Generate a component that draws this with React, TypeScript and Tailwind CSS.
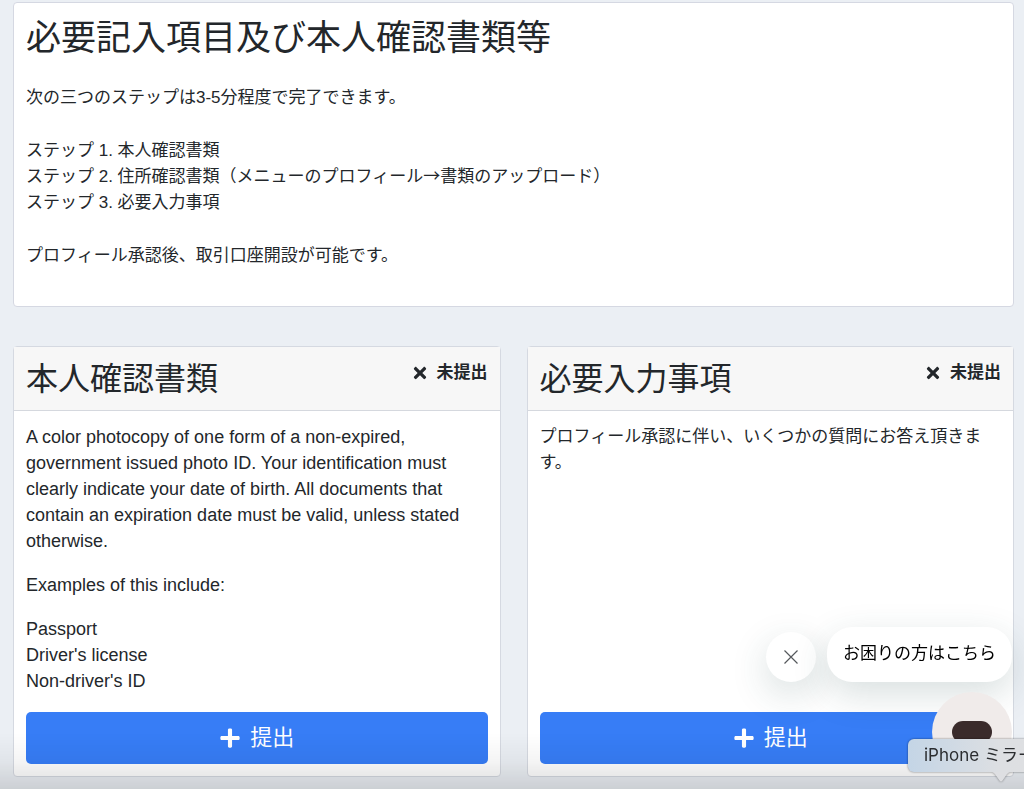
import type { ReactNode } from 'react';
import { FaPlus, FaTimes } from 'react-icons/fa';

function StepCard({ title, children }: { title: string; children: ReactNode }) {
  return (
    <section className="flex flex-col rounded-[4px] border border-[#d5d9e1] bg-white">
      <header className="flex items-start justify-between border-b border-[#d5d8de] bg-[#f7f7f7] px-3 pt-[13px] pb-3">
        <h2 className="text-[32px] leading-[38px]">{title}</h2>
        <p className="flex items-center gap-2 font-bold">
          <FaTimes className="size-[18px]" aria-hidden="true" />
          未提出
        </p>
      </header>
      <div className="flex grow flex-col px-3 pt-[13px] pb-3">
        <div className="grow space-y-[18px] pb-[18px]">{children}</div>
        <button
          type="button"
          className="flex h-[52px] w-full items-center justify-center gap-[9px] rounded-[5px] bg-[#377df6] text-[22px] text-white"
        >
          <FaPlus className="size-[22px]" aria-hidden="true" />
          提出
        </button>
      </div>
    </section>
  );
}

function ChatWidget() {
  return (
    <div className="fixed right-3 bottom-[17px] flex flex-col items-end gap-[10px] text-black">
      <div className="flex items-end gap-[11px]">
        <button
          type="button"
          aria-label="閉じる"
          className="flex size-[50px] items-center justify-center rounded-full bg-white text-[#55585c] shadow-[0_12px_36px_rgba(40,80,75,0.18)]"
        >
          <svg className="size-[14px]" viewBox="0 0 14 14" fill="none" stroke="currentColor" strokeWidth="1.2" aria-hidden="true">
            <path d="M0.5 0.5 13.5 13.5M13.5 0.5 0.5 13.5" />
          </svg>
        </button>
        <p className="rounded-[25px] bg-white px-4 pt-[14px] pb-[15px] shadow-[0_12px_36px_rgba(40,80,75,0.18)]">お困りの方はこちら</p>
      </div>
      <button type="button" aria-label="チャット" className="flex size-[80px] items-center justify-center rounded-full bg-[#f0ebea]">
        <span className="h-[22px] w-10 rounded-full bg-[#3a2b2b]" />
      </button>
    </div>
  );
}

function DockTooltip() {
  return (
    <div className="fixed -right-[70px] bottom-[7px] w-[186px] drop-shadow-[0_0_1px_rgba(0,0,0,0.45)]">
      <p className="rounded-[6px] bg-linear-to-r from-[#c4d5e6] via-[#dddfe2] via-50% to-[#e0e0e2] px-4 py-[5px] font-['Inter','Noto_Sans_CJK_JP',sans-serif] leading-[23px] whitespace-nowrap text-[#2b2d30]">
        iPhone ミラー
      </p>
      <svg className="mx-auto block h-[10px] w-[24px]" viewBox="0 0 24 10" fill="#dedfe2" aria-hidden="true">
        <path d="M1 0C5 0 6 2 8 5L10.5 8.5Q12 10.5 13.5 8.5L16 5C18 2 19 0 23 0Z" />
      </svg>
    </div>
  );
}

export default function App() {
  return (
    <div className="min-h-screen overflow-x-hidden bg-[#ebeff4] pt-[2px] pr-[10px] pb-3 pl-[13px] font-['Liberation_Sans','Noto_Sans_CJK_JP',sans-serif] text-[17px] leading-[26px] text-[#23272b]" lang="ja">
      <main className="flex flex-col gap-[39px]">
        <section className="rounded-[4px] border border-[#d5d8e2] bg-white px-3 pt-[14px] pb-[37px]">
          <h1 className="mb-[26px] text-[35px] leading-[42px]">必要記入項目及び本人確認書類等</h1>
          <p>次の三つのステップは3-5分程度で完了できます。</p>
          <ul className="my-[27px]">
            <li>ステップ 1. 本人確認書類</li>
            <li>
              ステップ 2. 住所確認書類（メニューのプロフィール
              <span className="font-['Noto_Sans_CJK_JP',sans-serif] leading-none">→</span>
              書類のアップロード）
            </li>
            <li>ステップ 3. 必要入力事項</li>
          </ul>
          <p>プロフィール承認後、取引口座開設が可能です。</p>
        </section>
        <div className="grid grid-cols-2 gap-[26px]">
          <StepCard title="本人確認書類">
            <div className="space-y-[18px] text-[18px]" lang="en">
              <p>
                A color photocopy of one form of a non-expired, government issued photo ID. Your identification must
                clearly indicate your date of birth. All documents that contain an expiration date must be valid, unless
                stated otherwise.
              </p>
              <p>Examples of this include:</p>
              <ul>
                <li>Passport</li>
                <li>Driver's license</li>
                <li>Non-driver's ID</li>
              </ul>
            </div>
          </StepCard>
          <StepCard title="必要入力事項">
            <p>プロフィール承認に伴い、いくつかの質問にお答え頂きます。</p>
          </StepCard>
        </div>
      </main>
      <div className="pointer-events-none fixed inset-x-0 bottom-0 h-[56px] bg-linear-to-b from-transparent via-black/4 via-50% to-black/13" />
      <ChatWidget />
      <DockTooltip />
    </div>
  );
}
